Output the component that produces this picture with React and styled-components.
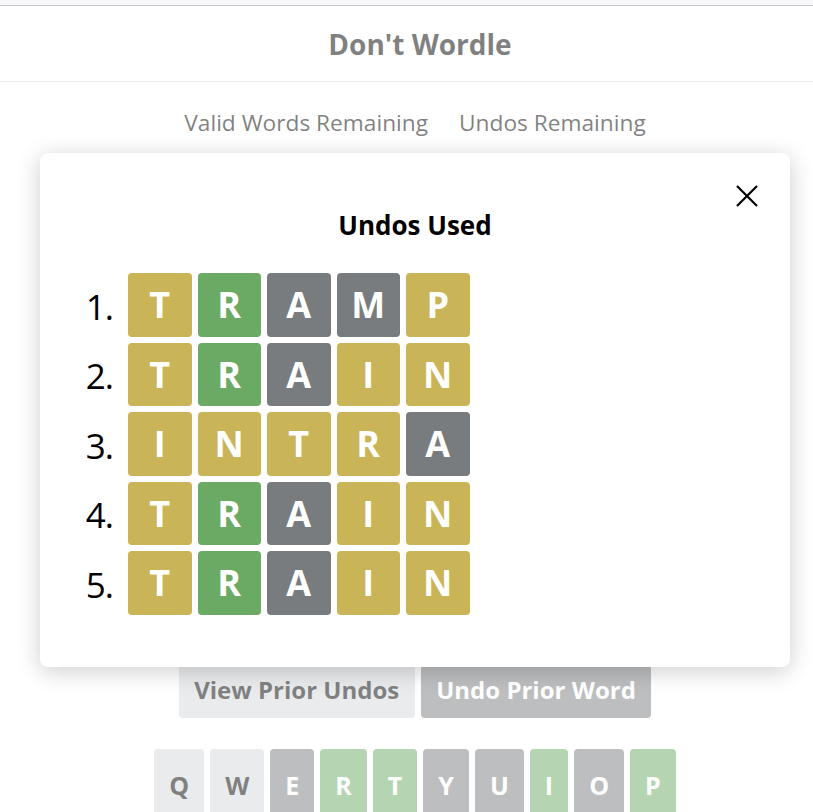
import React from "react";
import styled, { createGlobalStyle } from "styled-components";

const GlobalStyle = createGlobalStyle`
  html, body {
    margin: 0;
    padding: 0;
    background: #ffffff;
    overflow: hidden;
  }
  body {
    font-family: "Open Sans", "Noto Sans", sans-serif;
    color: #000;
  }
  * { box-sizing: border-box; }
`;

const Root = styled.div`
  position: relative;
  width: 830px;
  min-height: 812px;
`;

const Page = styled.div`
  display: flex;
  flex-direction: column;
  align-items: center;
`;

const TopStrip = styled.div`
  align-self: stretch;
  height: 6px;
  background: #f0f0f4;
  border-bottom: 1px solid #929292;
`;

const Header = styled.header`
  align-self: stretch;
  height: 76px;
  display: flex;
  align-items: center;
  justify-content: center;
  border-bottom: 1px solid #d3d6da;
`;

const Title = styled.h1`
  margin: 0;
  font-size: 28px;
  font-weight: 700;
  padding-left: 10px;
`;

const Stats = styled.div`
  display: flex;
  gap: 31px;
  margin-top: 26px;
`;

const Stat = styled.div`
  display: flex;
  flex-direction: column;
  align-items: center;
`;

const StatLabel = styled.div`
  font-size: 22.7px;
  line-height: 30px;
`;

const StatValue = styled.div`
  margin-top: 20px;
  font-size: 28px;
  line-height: 38px;
  font-weight: 700;
`;

const Board = styled.div`
  display: grid;
  grid-template-columns: repeat(5, 62px);
  gap: 6px;
  margin: 11px 0 29px;
`;

const BoardCell = styled.div`
  height: 66px;
  border: 2px solid #d3d6da;
  border-radius: 4px;
`;

const Actions = styled.div`
  display: flex;
  gap: 6px;
`;

const ActionButton = styled.button`
  font-family: inherit;
  font-size: 24px;
  font-weight: 700;
  line-height: 30px;
  padding: 13px 15.5px;
  border: none;
  border-radius: 4px;
  background: ${(p) => (p.$primary ? "#787c7e" : "#d3d6da")};
  color: ${(p) => (p.$primary ? "#ffffff" : "#000000")};
`;

const Keyboard = styled.div`
  display: flex;
  flex-direction: column;
  gap: 8px;
  margin-top: 31px;
`;

const KeyRow = styled.div`
  display: flex;
  gap: 6px;
  justify-content: center;
`;

const keyColors = {
  empty: { bg: "#d3d6da", fg: "#000000" },
  absent: { bg: "#787c7e", fg: "#ffffff" },
  correct: { bg: "#6aaa64", fg: "#ffffff" },
};

const Key = styled.button`
  font-family: inherit;
  height: 72px;
  padding: 0 15px;
  border: none;
  border-radius: 4px;
  font-size: 25px;
  font-weight: 700;
  background: ${(p) => keyColors[p.$state].bg};
  color: ${(p) => keyColors[p.$state].fg};
`;

const Overlay = styled.div`
  position: absolute;
  inset: 0;
  background: rgba(255, 255, 255, 0.5);
  display: flex;
  justify-content: center;
  align-items: flex-start;
  padding-top: 153px;
`;

const Modal = styled.div`
  position: relative;
  width: 750px;
  height: 514px;
  background: #ffffff;
  border-radius: 8px;
  box-shadow: 0 4px 23px 0 rgba(0, 0, 0, 0.2);
  padding: 55px 0 0 33px;
  display: flex;
  flex-direction: column;
`;

const CloseButton = styled.button`
  position: absolute;
  top: 31px;
  right: 32px;
  width: 23px;
  height: 23px;
  padding: 0;
  border: none;
  background: transparent;
  display: flex;
  align-items: center;
  justify-content: center;
`;

const ModalTitle = styled.h2`
  margin: 0 33px 0 0;
  text-align: center;
  font-size: 26px;
  line-height: 34px;
  font-weight: 700;
`;

const UndoList = styled.ol`
  list-style: none;
  margin: 31px 0 0;
  padding: 0;
  display: flex;
  flex-direction: column;
  gap: 6px;
`;

const UndoRow = styled.li`
  display: flex;
  align-items: center;
`;

const RowNumber = styled.span`
  width: 40px;
  margin-right: 15px;
  text-align: right;
  font-size: 35px;
  line-height: 40px;
  padding-top: 4px;
  letter-spacing: -1px;
`;

const Tiles = styled.div`
  display: grid;
  grid-template-columns: repeat(5, 63.5px);
  gap: 6px;
`;

const tileColors = {
  present: "#c9b458",
  correct: "#6aaa64",
  absent: "#787c7e",
};

const Tile = styled.div`
  height: 63.5px;
  border-radius: 4px;
  background: ${(p) => tileColors[p.$state]};
  color: #ffffff;
  font-size: 36px;
  font-weight: 700;
  display: flex;
  align-items: center;
  justify-content: center;
`;

const P = "present";
const C = "correct";
const A = "absent";

const undos = [
  { word: "TRAMP", states: [P, C, A, A, P] },
  { word: "TRAIN", states: [P, C, A, P, P] },
  { word: "INTRA", states: [P, P, P, P, A] },
  { word: "TRAIN", states: [P, C, A, P, P] },
  { word: "TRAIN", states: [P, C, A, P, P] },
];

const keys = [
  ["Q", "empty"],
  ["W", "empty"],
  ["E", "absent"],
  ["R", "correct"],
  ["T", "correct"],
  ["Y", "absent"],
  ["U", "absent"],
  ["I", "correct"],
  ["O", "absent"],
  ["P", "correct"],
];

export default function App() {
  return (
    <Root>
      <GlobalStyle />
      <Page>
        <TopStrip />
        <Header>
          <Title>Don't Wordle</Title>
        </Header>
        <Stats>
          <Stat>
            <StatLabel>Valid Words Remaining</StatLabel>
            <StatValue>412</StatValue>
          </Stat>
          <Stat>
            <StatLabel>Undos Remaining</StatLabel>
            <StatValue>0</StatValue>
          </Stat>
        </Stats>
        <Board>
          {Array.from({ length: 30 }).map((_, i) => (
            <BoardCell key={i} />
          ))}
        </Board>
        <Actions>
          <ActionButton>View Prior Undos</ActionButton>
          <ActionButton $primary>Undo Prior Word</ActionButton>
        </Actions>
        <Keyboard>
          <KeyRow>
            {keys.map(([k, s]) => (
              <Key key={k} $state={s}>
                {k}
              </Key>
            ))}
          </KeyRow>
        </Keyboard>
      </Page>
      <Overlay>
        <Modal>
          <CloseButton aria-label="Close">
            <svg width="22" height="22" viewBox="0 0 22 22">
              <path d="M1 1 L21 21 M21 1 L1 21" stroke="#000" strokeWidth="2.2" fill="none" />
            </svg>
          </CloseButton>
          <ModalTitle>Undos Used</ModalTitle>
          <UndoList>
            {undos.map((u, i) => (
              <UndoRow key={i}>
                <RowNumber>{i + 1}.</RowNumber>
                <Tiles>
                  {u.word.split("").map((ch, j) => (
                    <Tile key={j} $state={u.states[j]}>
                      {ch}
                    </Tile>
                  ))}
                </Tiles>
              </UndoRow>
            ))}
          </UndoList>
        </Modal>
      </Overlay>
    </Root>
  );
}
